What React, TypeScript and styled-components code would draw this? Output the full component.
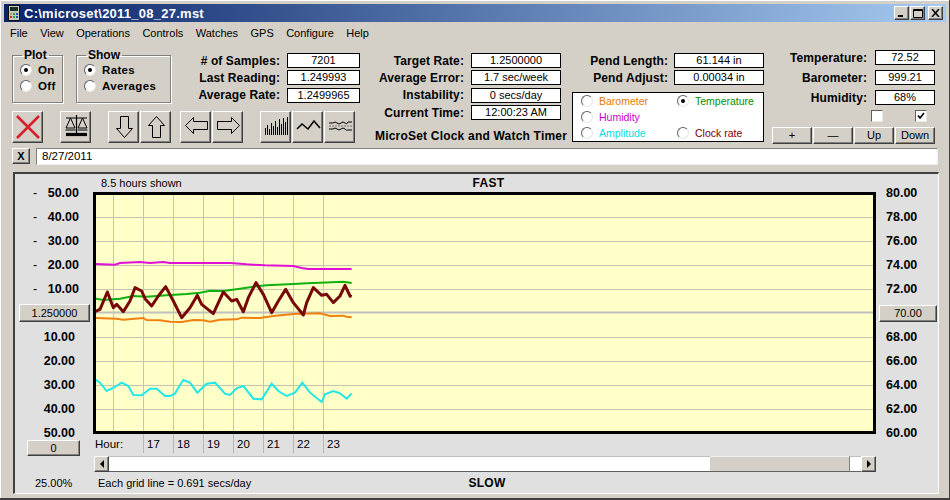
import React from "react";
import styled, { createGlobalStyle } from "styled-components";

const Global = createGlobalStyle`
  html, body { margin: 0; padding: 0; background: #d4d0c8; }
  body { font-family: "Liberation Sans", Arial, sans-serif; font-size: 11px; color: #000; }
  * { box-sizing: border-box; }
`;

const Window = styled.div`
  width: 950px; height: 500px; overflow: hidden; background: #d4d0c8;
  border-right: 1px solid #404040; border-bottom: 2px solid #404040;
  padding: 4px 3px 0 4px;
  box-shadow: inset 1px 1px #fff;
`;
const TitleBar = styled.div`
  height: 18px; display: flex; align-items: center; padding: 0 3px 0 4px;
  background: linear-gradient(90deg, #0a246a 0%, #a6caf0 100%);
`;
const TitleText = styled.span`
  color: #fff; font: bold 13px "Liberation Sans", sans-serif; margin-left: 4px; flex: 1; letter-spacing: 0.25px;
`;
const WinButton = styled.div<{ $ml?: number }>`
  width: 15px; height: 14px; margin-left: ${p => p.$ml ?? 1}px; background: #d4d0c8;
  border-top: 1px solid #fff; border-left: 1px solid #fff; border-right: 1px solid #404040; border-bottom: 1px solid #404040;
  box-shadow: inset -1px -1px #808080; display: grid; place-items: center;
`;
const Menu = styled.div`
  height: 19px; display: flex; align-items: center; gap: 12.4px; padding-left: 6px; font-size: 11px; padding-top: 2px;
`;
const Top = styled.div`
  display: flex; margin: 7px 0 0 8px; height: 94px;
`;
const ColA = styled.div`width: 348px;`;
const GroupsRow = styled.div`display: flex;`;
const Group = styled.fieldset<{ $w: number; $mr: number }>`
  width: ${p => p.$w}px; height: 55px; margin: 0 ${p => p.$mr}px 0 0; padding: 0 0 0 7px;
  border: 1px solid #808080; box-shadow: 1px 1px #fff, inset 1px 1px #fff;
`;
const Legend = styled.legend`
  font: bold 12px "Liberation Sans", sans-serif; padding: 0 2px; margin-left: 2px; line-height: 14px;
`;
const RadioRow = styled.div`
  display: flex; align-items: center; gap: 6px; height: 16px; font: bold 11.5px "Liberation Sans", sans-serif; letter-spacing: .35px;
`;
const RadioDot = styled.span<{ $on?: boolean }>`
  width: 12px; height: 12px; border-radius: 50%; background: #fff; flex: none;
  border: 1px solid; border-color: #606060 #e8e8e8 #e8e8e8 #606060; display: grid; place-items: center;
  &::after { content: ""; width: 4px; height: 4px; border-radius: 50%; background: ${p => (p.$on ? "#000" : "transparent")}; }
`;
const Readouts = styled.div<{ $top?: number }>`
  flex: 1; display: grid; grid-auto-rows: 15px; row-gap: 2.4px; margin-top: ${p => p.$top ?? 0}px;
`;
const RRow = styled.div<{ $gap?: number; $box?: number }>`
  display: grid; grid-template-columns: 1fr ${p => p.$box ?? 90}px; column-gap: ${p => p.$gap ?? 7}px; align-items: center;
`;
const RLabel = styled.span`
  font: bold 12px "Liberation Sans", sans-serif; text-align: right; white-space: nowrap; letter-spacing: .1px;
`;
const RValue = styled.span`
  height: 15px; background: #fff; border: 1px solid #000; font-size: 11px; line-height: 13px; text-align: center; white-space: nowrap;
`;
const Toolbar = styled.div`display: flex; margin-top: 8px;`;
const ToolGroup = styled.div<{ $ml?: number }>`display: flex; gap: 1px; margin-left: ${p => p.$ml ?? 0}px;`;
const ToolButton = styled.div`
  width: 31px; height: 32px; background: #d4d0c8;
  border-top: 1px solid #fff; border-left: 1px solid #fff; border-right: 1px solid #404040; border-bottom: 1px solid #404040;
  box-shadow: inset -1px -1px #808080;
  svg { display: block; margin: -1px; }
`;
const ColB = styled.div`width: 186px; margin-left: 15px;`;
const AppName = styled.div`
  font: bold 12px "Liberation Sans", sans-serif; margin-top: 9px; text-align: right; white-space: nowrap; letter-spacing: .2px;
`;
const ColC = styled.div`width: 192px; margin-left: 11px;`;
const SelectBox = styled.div`
  margin-top: 7px; width: 192px; height: 50px; background: #fff; border: 1px solid #000;
  display: grid; grid-template-columns: 96px 96px; grid-auto-rows: 16px; padding-left: 8px;
`;
const SelectItem = styled.div<{ $c: string }>`
  display: flex; align-items: center; gap: 6px; color: ${p => p.$c}; font-size: 10.5px;
`;
const ColD = styled.div`width: 163px; margin-left: 8px; padding-top: 2px;`;
const ReadoutsD = styled.div`display: grid; grid-auto-rows: 15px; row-gap: 5px;`;
const Checks = styled.div`display: flex; gap: 32px; padding-left: 99px; margin-top: 5px;`;
const Check = styled.span`
  width: 12px; height: 12px; background: #fff; border: 1px solid; border-color: #606060 #e8e8e8 #e8e8e8 #606060;
  display: grid; place-items: center;
`;
const MiniButtons = styled.div`display: flex; gap: 1px; margin-top: 5px;`;
const Btn = styled.div<{ $w?: number; $h?: number; $ml?: number; $bold?: boolean }>`
  width: ${p => p.$w ?? 40}px; height: ${p => p.$h ?? 17}px; margin-left: ${p => p.$ml ?? 0}px; background: #d4d0c8; flex: none;
  border-top: 1px solid #fff; border-left: 1px solid #fff; border-right: 1px solid #404040; border-bottom: 1px solid #404040;
  box-shadow: inset -1px -1px #808080; display: grid; place-items: center; font-size: 11px; line-height: 1;
  font-weight: ${p => (p.$bold ? "bold" : "normal")};
`;
const DateRow = styled.div`display: flex; gap: 6px; margin: 6px 0 0 8px;`;
const DateField = styled.div`
  width: 902px; height: 17px; background: #fff; padding-left: 5px; font-size: 11.5px; line-height: 15px;
  border: 1px solid; border-color: #808080 #f0f0f0 #f0f0f0 #808080;
`;
const Panel = styled.div`
  margin: 7px 0 0 9px; width: 926px; height: 322px; background: #e0e0e0;
  border-top: 2px solid #404040; border-left: 2px solid #404040; border-right: 1px solid #fff; border-bottom: 1px solid #fff;
  display: grid; grid-template-columns: 78px 783px 1fr;
`;
const Side = styled.div`padding-top: 7px;`;
const ScaleRow = styled.div<{ $pl?: number; $pr?: number; $end?: boolean }>`
  height: 24px; display: flex; align-items: center; justify-content: ${p => (p.$end ? "flex-end" : "space-between")};
  padding: 0 ${p => p.$pr ?? 14}px 0 ${p => p.$pl ?? 18}px;
  font: bold 12.5px "Liberation Sans", sans-serif;
`;
const Dash = styled.span`font-weight: normal;`;
const ScaleButtonRow = styled.div`height: 24px; display: flex; align-items: center;`;
const Percent = styled.div`margin: 20px 0 0 20px; font-size: 11px; line-height: 14px;`;
const Center = styled.div`display: flex; flex-direction: column;`;
const Header = styled.div<{ $pl?: number }>`
  height: 18px; display: grid; grid-template-columns: 1fr auto 1fr; align-items: center; padding-left: ${p => p.$pl ?? 0}px; font-size: 11px;
`;
const Heading = styled.span`font: bold 12px "Liberation Sans", sans-serif; letter-spacing: .3px;`;
const PlotBox = styled.div`
  width: 783px; height: 242px; border: 3px solid #000; background: #ffffc8; flex: none;
  svg { display: block; }
`;
const Hours = styled.div`height: 22px; display: flex; align-items: flex-start; font-size: 11.5px;`;
const HourLabel = styled.span<{ $first?: boolean }>`
  height: 19px; line-height: 21px; flex: none; width: ${p => (p.$first ? 50 : 30)}px;
  padding-left: ${p => (p.$first ? 2 : 3)}px; border-left: ${p => (p.$first ? "none" : "1px solid #b8b8b0")};
`;
const Scrollbar = styled.div`width: 782px; height: 16px; margin-left: 1px; display: flex; flex: none;`;
const ScrollArrow = styled(Btn)`width: 15px; height: 16px;`;
const TrackOn = styled.div`width: 601px; background: #fff; border-top: 1px solid #c0c0c0; border-bottom: 1px solid #606060;`;
const TrackOff = styled.div`flex: 1; background: #d4d0c8; border-top: 1px solid #f0f0f0; border-bottom: 1px solid #606060;`;
const Thumb = styled.div`width: 12px; background: #fff; border-top: 1px solid #c0c0c0; border-bottom: 1px solid #606060; border-left: 1px solid #808080;`;
const Foot = styled(Header)`height: 20px; padding-top: 2px;`;
const SideRight = styled(Side)``;

const pts = (a: number[][], oy: number) => a.map(([x, y]) => `${x / 3},${oy + y / 3}`).join(" ");

const magenta = pts([[285,294],[345,296],[360,291],[420,288],[450,291],[490,288],[510,291],[690,291],[740,295],[760,296],[795,298],[880,300],[905,306],[925,309],[1055,309]],165);
const green = pts([[285,398],[310,402],[360,398],[400,390],[440,392],[500,388],[560,384],[600,380],[630,374],[670,375],[720,368],[760,362],[800,358],[880,354],[920,352],[960,350],[1030,347],[1055,351]],165);
const orange = pts([[285,456],[350,458],[370,461],[430,456],[440,462],[480,463],[510,467],[545,468],[580,462],[610,463],[630,467],[660,461],[710,460],[725,455],[780,456],[820,450],[880,444],[960,442],[990,450],[1030,449],[1040,452],[1055,454]],165);
const clock = pts([[285,437],[300,430],[322,378],[340,425],[350,415],[370,437],[390,405],[405,365],[425,375],[435,398],[455,420],[475,390],[497,362],[520,405],[545,455],[570,425],[592,388],[605,415],[640,443],[670,378],[695,405],[710,400],[730,437],[745,395],[768,350],[790,385],[815,440],[835,405],[857,370],[880,410],[910,447],[920,410],[940,365],[965,388],[980,385],[1000,410],[1020,390],[1035,358],[1050,390],[1055,392]],165);
const cyan = pts([[285,145],[300,155],[320,180],[345,168],[365,155],[385,165],[400,192],[425,193],[450,173],[470,173],[495,195],[510,195],[525,188],[535,170],[550,147],[570,155],[592,185],[620,158],[645,155],[675,188],[690,192],[710,172],[730,165],[760,203],[785,205],[815,158],[835,180],[860,195],[885,185],[907,155],[930,185],[965,213],[975,190],[1000,180],[1020,187],[1040,203],[1055,187]],330);

const GRID_Y = [216.5, 240.5, 264.5, 288.5, 336.5, 360.5, 384.5, 408.5];
const GRID_X = [113.5, 143.5, 173.5, 203.5, 233.5, 263.5, 293.5, 323.5];
const BAR_H = [7, 10, 6, 12, 9, 14, 8, 16, 11, 17, 13, 18];

const Chart = () => (
  <svg width="777" height="236" viewBox="96 194 777 236" fill="none">
    <g stroke="#c6c6b0" strokeWidth="1" shapeRendering="crispEdges">
      {GRID_Y.map(y => <line key={y} x1="96" x2="873" y1={y} y2={y} />)}
      {GRID_X.map(x => <line key={x} x1={x} x2={x} y1="194" y2="430" />)}
    </g>
    <line x1="96" x2="873" y1="311.5" y2="311.5" stroke="#c0c0c0" strokeWidth="2" />
    <polyline points={magenta} stroke="#e010d8" strokeWidth="2" />
    <polyline points={orange} stroke="#f08010" strokeWidth="2" />
    <polyline points={green} stroke="#10b010" strokeWidth="2" />
    <polyline points={cyan} stroke="#20e8e8" strokeWidth="2" />
    <polyline points={clock} stroke="#780808" strokeWidth="3" strokeLinejoin="round" />
  </svg>
);

const Ico: React.FC<{ children: React.ReactNode }> = ({ children }) => (
  <svg width="31" height="32" viewBox="0 0 31 32" fill="none" stroke="#000">{children}</svg>
);

const AppIcon = () => (
  <svg width="12" height="16" viewBox="0 0 12 16">
    <rect x="0.5" y="0.5" width="11" height="15" fill="#c8c8c0" stroke="#101010" />
    <rect x="2" y="2" width="8" height="4" fill="#18302a" />
    <rect x="2" y="8" width="2" height="2" fill="#d0a020" /><rect x="5" y="8" width="2" height="2" fill="#20a050" /><rect x="8" y="8" width="2" height="2" fill="#2050c0" />
    <rect x="2" y="11" width="2" height="2" fill="#d03020" /><rect x="5" y="11" width="2" height="2" fill="#20a050" /><rect x="8" y="11" width="2" height="2" fill="#2050c0" />
  </svg>
);

const Tool = { 
  cancel: <Ico><path d="M5 5 L27 27 M27 5 L5 27" stroke="#d8202c" strokeWidth="2.6" /></Ico>,
  scale: <Ico>
    <path d="M6 7 H27 M16.5 4 V22" strokeWidth="1.2" />
    <path d="M10.5 7 L6 17 H15 Z M22.5 7 L18 17 H27 Z" strokeWidth="1" />
    <path d="M5.5 19 H15.5 M17.5 19 H27.5" strokeWidth="1" />
    <path d="M6 23.5 H27" strokeWidth="3.2" />
  </Ico>,
  down: <Ico><path d="M12.5 5.5 H20.5 V17.5 H24.5 L16.5 26.5 L8.5 17.5 H12.5 Z" strokeWidth="1" /></Ico>,
  up: <Ico><path d="M12.5 26.5 H20.5 V14.5 H24.5 L16.5 5.5 L8.5 14.5 H12.5 Z" strokeWidth="1" /></Ico>,
  left: <Ico><path d="M27.5 10.5 V18.5 H13.5 V22.5 L5.5 14.5 L13.5 6.5 V10.5 Z" strokeWidth="1" /></Ico>,
  right: <Ico><path d="M5.5 10.5 V18.5 H19.5 V22.5 L27.5 14.5 L19.5 6.5 V10.5 Z" strokeWidth="1" /></Ico>,
  bars: <Ico><g strokeWidth="1" shapeRendering="crispEdges">{BAR_H.map((h, i) => <line key={i} x1={5.5 + i * 2} x2={5.5 + i * 2} y1="24" y2={24 - h} />)}</g></Ico>,
  line: <Ico><path d="M5 18 L10 13 L16 18 L22 10 L28 17" strokeWidth="1.5" /></Ico>,
  wave: <Ico>
    <path d="M5 12 H9 Q11 10 13 12 T17 12 T21 12 T24 11 H28" strokeWidth="1" />
    <path d="M5 15 H28" strokeWidth="1" strokeDasharray="2 1" stroke="#707070" />
    <path d="M5 18 H9 Q11 16 13 18 T17 18 T21 18 T24 19 H28" strokeWidth="1" />
  </Ico>,
};

const Tri: React.FC<{ dir: "l" | "r" }> = ({ dir }) => (
  <svg width="6" height="8" viewBox="0 0 6 8"><path d={dir === "l" ? "M5 0 V8 L1 4 Z" : "M1 0 V8 L5 4 Z"} fill="#000" /></svg>
);

const LEFT_TOP = ["50.00", "40.00", "30.00", "20.00", "10.00"];
const LEFT_BOTTOM = ["10.00", "20.00", "30.00", "40.00", "50.00"];
const RIGHT_TOP = ["80.00", "78.00", "76.00", "74.00", "72.00"];
const RIGHT_BOTTOM = ["68.00", "66.00", "64.00", "62.00", "60.00"];
const HOURS = ["17", "18", "19", "20", "21", "22", "23"];
const MENU = ["File", "View", "Operations", "Controls", "Watches", "GPS", "Configure", "Help"];

const Readout: React.FC<{ label: string; value: string; box?: number; gap?: number }> = ({ label, value, box, gap }) => (
  <RRow $box={box} $gap={gap}><RLabel>{label}</RLabel><RValue>{value}</RValue></RRow>
);

export default function App() {
  return (
    <Window>
      <Global />
      <TitleBar>
        <AppIcon />
        <TitleText>C:\microset\2011_08_27.mst</TitleText>
        <WinButton><svg width="9" height="8" viewBox="0 0 9 8"><rect x="1" y="6" width="5" height="2" /></svg></WinButton>
        <WinButton><svg width="10" height="9" viewBox="0 0 10 9" fill="none" stroke="#000"><path d="M.5 1.5 H9.5 M.5 .5 H9.5 V8.5 H.5 Z" /></svg></WinButton>
        <WinButton $ml={3}><svg width="9" height="8" viewBox="0 0 9 8" fill="none" stroke="#000" strokeWidth="1.5"><path d="M1 0 L8 8 M8 0 L1 8" /></svg></WinButton>
      </TitleBar>
      <Menu>{MENU.map(m => <span key={m}>{m}</span>)}</Menu>
      <Top>
        <ColA>
          <GroupsRow>
            <Group $w={51} $mr={13}>
              <Legend>Plot</Legend>
              <RadioRow><RadioDot $on />On</RadioRow>
              <RadioRow><RadioDot />Off</RadioRow>
            </Group>
            <Group $w={95} $mr={0}>
              <Legend>Show</Legend>
              <RadioRow><RadioDot $on />Rates</RadioRow>
              <RadioRow><RadioDot />Averages</RadioRow>
            </Group>
            <Readouts $top={5}>
              <Readout label="# of Samples:" value="7201" box={73} />
              <Readout label="Last Reading:" value="1.249993" box={73} />
              <Readout label="Average Rate:" value="1.2499965" box={73} />
            </Readouts>
          </GroupsRow>
          <Toolbar>
            <ToolGroup><ToolButton>{Tool.cancel}</ToolButton></ToolGroup>
            <ToolGroup $ml={17}><ToolButton>{Tool.scale}</ToolButton></ToolGroup>
            <ToolGroup $ml={17}><ToolButton>{Tool.down}</ToolButton><ToolButton>{Tool.up}</ToolButton></ToolGroup>
            <ToolGroup $ml={9}><ToolButton>{Tool.left}</ToolButton><ToolButton>{Tool.right}</ToolButton></ToolGroup>
            <ToolGroup $ml={17}><ToolButton>{Tool.bars}</ToolButton><ToolButton>{Tool.line}</ToolButton><ToolButton>{Tool.wave}</ToolButton></ToolGroup>
          </Toolbar>
        </ColA>
        <ColB>
          <Readouts $top={5}>
            <Readout label="Target Rate:" value="1.2500000" />
            <Readout label="Average Error:" value="1.7 sec/week" />
            <Readout label="Instability:" value="0 secs/day" />
            <Readout label="Current Time:" value="12:00:23 AM" />
          </Readouts>
          <AppName>MicroSet Clock and Watch Timer</AppName>
        </ColB>
        <ColC>
          <Readouts $top={5}>
            <Readout label="Pend Length:" value="61.144 in" gap={6} />
            <Readout label="Pend Adjust:" value="0.00034 in" gap={6} />
          </Readouts>
          <SelectBox>
            <SelectItem $c="#e87800"><RadioDot />Barometer</SelectItem>
            <SelectItem $c="#009000"><RadioDot $on />Temperature</SelectItem>
            <SelectItem $c="#cc00cc"><RadioDot />Humidity</SelectItem>
            <span />
            <SelectItem $c="#00e0e0"><RadioDot />Amplitude</SelectItem>
            <SelectItem $c="#800000"><RadioDot />Clock rate</SelectItem>
          </SelectBox>
        </ColC>
        <ColD>
          <ReadoutsD>
            <Readout label="Temperature:" value="72.52" box={60} gap={8} />
            <Readout label="Barometer:" value="999.21" box={60} gap={8} />
            <Readout label="Humidity:" value="68%" box={60} gap={8} />
          </ReadoutsD>
          <Checks>
            <Check />
            <Check><svg width="8" height="8" viewBox="0 0 8 8" fill="none" stroke="#000" strokeWidth="1.6"><path d="M1 3.5 L3 6 L7 1" /></svg></Check>
          </Checks>
          <MiniButtons><Btn>+</Btn><Btn>—</Btn><Btn>Up</Btn><Btn>Down</Btn></MiniButtons>
        </ColD>
      </Top>
      <DateRow>
        <Btn $w={18} $h={16} $bold>X</Btn>
        <DateField>8/27/2011</DateField>
      </DateRow>
      <Panel>
        <Side>
          {LEFT_TOP.map((v, i) => <ScaleRow key={i}><Dash>-</Dash>{v}</ScaleRow>)}
          <ScaleButtonRow><Btn $w={71} $h={18} $ml={4}>1.250000</Btn></ScaleButtonRow>
          {LEFT_BOTTOM.map((v, i) => <ScaleRow key={i} $end $pr={18}>{v}</ScaleRow>)}
          <Btn $w={53} $h={16} $ml={12} style={{ marginTop: -5 }}>0</Btn>
          <Percent>25.00%</Percent>
        </Side>
        <Center>
          <Header $pl={8}>
            <span>8.5 hours shown</span>
            <Heading>FAST</Heading>
            <span />
          </Header>
          <PlotBox><Chart /></PlotBox>
          <Hours>
            <HourLabel $first>Hour:</HourLabel>
            {HOURS.map(h => <HourLabel key={h}>{h}</HourLabel>)}
          </Hours>
          <Scrollbar>
            <ScrollArrow><Tri dir="l" /></ScrollArrow>
            <TrackOn />
            <TrackOff />
            <Thumb />
            <ScrollArrow><Tri dir="r" /></ScrollArrow>
          </Scrollbar>
          <Foot $pl={5}>
            <span>Each grid line = 0.691 secs/day</span>
            <Heading>SLOW</Heading>
            <span />
          </Foot>
        </Center>
        <SideRight>
          {RIGHT_TOP.map((v, i) => <ScaleRow key={i} $pl={10} $pr={0}>{v}</ScaleRow>)}
          <ScaleButtonRow><Btn $w={58} $h={17} $ml={3}>70.00</Btn></ScaleButtonRow>
          {RIGHT_BOTTOM.map((v, i) => <ScaleRow key={i} $pl={10} $pr={0}>{v}</ScaleRow>)}
        </SideRight>
      </Panel>
    </Window>
  );
}
